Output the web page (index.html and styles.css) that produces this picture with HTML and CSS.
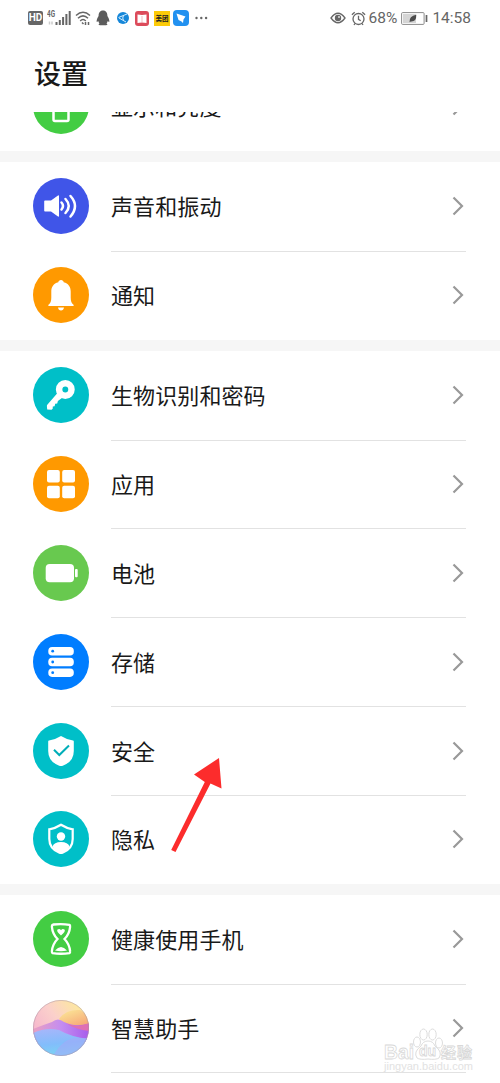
FILE: index.html
```html
<!DOCTYPE html>
<html lang="zh-CN">
  <head>
    <meta charset="UTF-8" />
    <meta name="viewport" content="width=device-width, initial-scale=1.0" />
    <title>设置</title>
    <link rel="stylesheet" href="styles.css">
  </head>
  <body>
    <svg width="0" height="0" class="defs">
      <symbol id="chevron" viewBox="0 0 12 20">
        <path d="M1.5 1.5 10 10 1.5 18.5" fill="none" stroke="#999" stroke-width="2.200" />
      </symbol>
    </svg>

    <div class="status">
      <div class="status-left">
        <div class="hd">HD</div>
        <svg class="signal" width="25" height="18" viewBox="0 0 25 18">
          <text x="0" y="8" class="net" textLength="8" lengthAdjust="spacingAndGlyphs">4G</text>
          <path d="M2.500 12.500v3M5 12.500v3" stroke="#ccc" stroke-width="1.500" />
          <path d="M9.500 13v3M12.800 11v5M16.100 8v8M19.400 5v11M22.700 2v14" stroke="#666" stroke-width="2" />
        </svg>
        <svg class="wifi" width="16" height="16" viewBox="0 0 16 16" fill="none" stroke="#666" stroke-width="1.500">
          <path d="M1 5.500Q8-1 15 5.500M3 8.300Q8 3.500 13 8.300M5.200 11Q8 8.200 10.800 11" />
          <path d="M7 12.500l1.500 1.500M10.500 12v3M13.500 12v3" />
        </svg>
        <svg class="qq" width="14" height="16" viewBox="0 0 14 16" fill="#5c5c5c">
          <path d="M7 .5C3.800.5 2.500 3 2.600 6 1.300 8 .4 10 .7 11.800c.4.7 1-.2 1.500-.7.2 1 .7 1.700 1.300 2.300-1.400.7-1 1.800.5 1.800h6c1.500 0 1.900-1.100.5-1.800.6-.6 1.100-1.300 1.300-2.300.5.5 1.100 1.400 1.500.7.300-1.800-.6-3.800-1.900-5.800C11.500 3 10.200.5 7 .5z" />
        </svg>
        <svg class="browser" width="12" height="12" viewBox="0 0 12 12">
          <circle cx="6" cy="6" r="6" fill="#1687d9" />
          <path d="M1.500 5.500 10 2M2 6l7 4M6.500 3.500Q5 6 6.500 8.500" fill="none" stroke="#d8efff" />
        </svg>
        <svg class="book" width="14" height="15" viewBox="0 0 14 15">
          <rect width="14" height="15" rx="3" fill="#dc4b5b" />
          <path d="M2.500 3.500 7 4 11.500 3.500v8.500L7 11.500l-4.500.5z" fill="#fff" />
          <path d="M7 5v6" stroke="#f0bdc3" />
        </svg>
        <div class="meituan">美团</div>
        <svg class="bird" width="16" height="16" viewBox="0 0 16 16">
          <rect width="16" height="16" rx="4" fill="#2291f0" />
          <path d="M3.500 3.500 12.500 6.500 10.500 9.500 10 13 8.500 11.500 5.500 10z" fill="#fff" />
        </svg>
        <svg width="13" height="4" viewBox="0 0 13 4" fill="#666">
          <circle cx="1.500" cy="2" r="1.200" /><circle cx="6.300" cy="2" r="1.200" /><circle cx="11.100" cy="2" r="1.200" />
        </svg>
      </div>
      <div class="status-right">
        <svg width="16" height="12" viewBox="0 0 16 12">
          <path d="M1 6Q8-3.500 15 6 8 15.500 1 6z" fill="none" stroke="#666" stroke-width="1.300" />
          <circle cx="8" cy="6" r="3.200" fill="#666" /><circle cx="9" cy="5" r="1" fill="#ddd" />
        </svg>
        <svg class="alarm" width="15" height="15" viewBox="0 0 15 15" fill="none" stroke="#666" stroke-width="1.300">
          <circle cx="7.500" cy="8" r="5.500" /><path d="M7.500 4.800V8.300L9.700 9.800M.9 3.800 3.700 1.200M14.100 3.800 11.300 1.200M4 12.500l-1 1.500M11 12.500l1 1.500" />
        </svg>
        <span class="percent">68%</span>
        <svg class="power" width="27" height="13" viewBox="0 0 27 13">
          <rect x=".6" y=".6" width="22.500" height="11.800" rx="1" fill="#fff" stroke="#8a8a8a" />
          <rect x="2" y="2" width="13" height="9" fill="#d5d5d5" />
          <path d="M8.500 10.300Q8 4 15.300 2.800 15.500 10 9.800 9.500z" fill="#4c4c4c" />
          <path d="M25.500 3v7" stroke="#666" stroke-width="1.700" />
        </svg>
        <span class="time">14:58</span>
      </div>
    </div>

    <h1>设置</h1>

    <div class="list">
      <div class="group">
        <div class="row">
          <svg class="icon" viewBox="0 0 56 56">
            <circle cx="28" cy="28" r="28" fill="#43cd43" />
            <rect x="20.500" y="17" width="15" height="26" rx="1.500" fill="none" stroke="#fff" stroke-width="2.500" />
          </svg>
          <div class="item"><span>显示和亮度</span><svg class="arrow"><use href="#chevron" /></svg></div>
        </div>
      </div>

      <div class="group">
        <div class="row">
          <svg class="icon" viewBox="0 0 56 56">
            <circle cx="28" cy="28" r="28" fill="#4055e8" />
            <path d="M12 22.500h6l7-5q1-.5 1 .7v19.600q0 1.200-1 .7l-7-5h-6q-.8 0-.8-.8v-9.400q0-.8.800-.8z" fill="#fff" />
            <path d="M28.500 24.500q3 3.500 0 7" fill="none" stroke="#fff" stroke-width="2.500" stroke-linecap="round" />
            <path d="M32.500 21q6.500 7 0 14M37.500 18q9 10 0 20.500" fill="none" stroke="#fff" stroke-width="2.500" stroke-linecap="round" />
          </svg>
          <div class="item"><span>声音和振动</span><svg class="arrow"><use href="#chevron" /></svg></div>
        </div>
        <div class="row">
          <svg class="icon" viewBox="0 0 56 56">
            <circle cx="28" cy="28" r="28" fill="#ff9900" />
            <path d="M28 13c-1.500 0-2.500 1-2.700 2.200-4.800 1.200-7 4.800-7 9.300v6c0 4-.8 5.500-2.800 7.300-.7.700-.3 1.200.5 1.200h24c.8 0 1.200-.5.5-1.200-2-1.800-2.800-3.300-2.800-7.300v-6c0-4.500-2.200-8.100-7-9.300C30.500 14 29.500 13 28 13zM25 40.500h6q-.5 3-3 3t-3-3z" fill="#fff" />
          </svg>
          <div class="item"><span>通知</span><svg class="arrow"><use href="#chevron" /></svg></div>
        </div>
      </div>

      <div class="group">
        <div class="row">
          <svg class="icon" viewBox="0 0 56 56">
            <circle cx="28" cy="28" r="28" fill="#00bfc8" />
            <circle cx="32.300" cy="22.500" r="6.200" fill="none" stroke="#fff" stroke-width="6.500" />
            <path d="M24.500 26 14.500 37.500q-.7.800-.6 1.700l.3 3.300 4.300.2 1.200-1 .1-2.200 1.800-.3.600-2.500 2-.3.700-2.500 5-3.700z" fill="#fff" />
          </svg>
          <div class="item"><span>生物识别和密码</span><svg class="arrow"><use href="#chevron" /></svg></div>
        </div>
        <div class="row">
          <svg class="icon" viewBox="0 0 56 56">
            <circle cx="28" cy="28" r="28" fill="#ff9900" />
            <g fill="#fff">
              <rect x="14" y="14" width="12.800" height="12.500" rx="2" /><rect x="29.200" y="14" width="12.800" height="12.500" rx="2" />
              <rect x="14" y="29.700" width="12.800" height="12.500" rx="2" /><rect x="29.200" y="29.700" width="12.800" height="12.500" rx="2" />
            </g>
          </svg>
          <div class="item"><span>应用</span><svg class="arrow"><use href="#chevron" /></svg></div>
        </div>
        <div class="row">
          <svg class="icon" viewBox="0 0 56 56">
            <circle cx="28" cy="28" r="28" fill="#68c94f" />
            <rect x="12.700" y="19" width="28.300" height="18.300" rx="4" fill="#fff" />
            <rect x="42" y="24" width="2.700" height="8.300" rx="1" fill="#fff" />
          </svg>
          <div class="item"><span>电池</span><svg class="arrow"><use href="#chevron" /></svg></div>
        </div>
        <div class="row">
          <svg class="icon" viewBox="0 0 56 56">
            <circle cx="28" cy="28" r="28" fill="#007dff" />
            <g fill="#fff">
              <rect x="15.300" y="13" width="25.500" height="8.500" rx="3.800" /><rect x="15.300" y="23.700" width="25.500" height="8.500" rx="3.800" /><rect x="15.300" y="34.400" width="25.500" height="8.500" rx="3.800" />
            </g>
            <g fill="#007dff"><circle cx="19.700" cy="17.200" r="1.400" /><circle cx="19.700" cy="28" r="1.400" /><circle cx="19.700" cy="38.700" r="1.400" /></g>
          </svg>
          <div class="item"><span>存储</span><svg class="arrow"><use href="#chevron" /></svg></div>
        </div>
        <div class="row">
          <svg class="icon" viewBox="0 0 56 56">
            <circle cx="28" cy="28" r="28" fill="#00bfc8" />
            <path d="M28 13q5.500 3.500 12 4.500.8.200.8 1v9.500q0 10.500-11 14.700-1.800.7-3.600 0-11-4.200-11-14.700v-9.500q0-.8.800-1Q22.500 16.500 28 13z" fill="#fff" />
            <path d="M21 26.800 26.300 32 36 22.500" fill="none" stroke="#00aeb8" stroke-width="2" />
          </svg>
          <div class="item"><span>安全</span><svg class="arrow"><use href="#chevron" /></svg></div>
        </div>
        <div class="row">
          <svg class="icon" viewBox="0 0 56 56">
            <circle cx="28" cy="28" r="28" fill="#00bfc8" />
            <path d="M28 13.800q5.500 3.500 11.700 4.500v9.700q0 9.800-10.200 13.700-1.500.6-3 0Q16.300 37.800 16.300 28v-9.700Q22.500 17.300 28 13.800z" fill="none" stroke="#fff" stroke-width="2.200" />
            <circle cx="28" cy="25.500" r="4.200" fill="#fff" />
            <path d="M19.500 35.500Q21 31 28 31t8.500 4.500Q34 40.500 28 42.200 22 40.500 19.500 35.500z" fill="#fff" />
          </svg>
          <div class="item"><span>隐私</span><svg class="arrow"><use href="#chevron" /></svg></div>
        </div>
      </div>

      <div class="group">
        <div class="row">
          <svg class="icon" viewBox="0 0 56 56">
            <circle cx="28" cy="28" r="28" fill="#43cd43" />
            <path d="M20.500 13.500Q29 12.500 36.500 13.800q.8.300.6 2-.6 7-5.600 12.200 5 5.200 5.600 12.200.2 1.700-.6 2Q28 43.300 19.500 42.200q-.7-.3-.6-2Q19.500 33.200 24.500 28 19.500 22.800 18.900 15.800q0-2 1.600-2.300z" fill="none" stroke="#fff" stroke-width="2.300" />
            <path d="M28 24.500Q23 20.500 24.500 18.600 26.500 17.200 28 19.200 29.500 17.200 31.500 18.600 33 20.500 28 24.500zM22 39.500Q28 32.500 34 39.500 28 41 22 39.500z" fill="#fff" />
          </svg>
          <div class="item"><span>健康使用手机</span><svg class="arrow"><use href="#chevron" /></svg></div>
        </div>
        <div class="row">
          <svg class="icon" viewBox="0 0 56 56">
            <defs>
              <clipPath id="ball"><circle cx="28" cy="28" r="28" /></clipPath>
              <linearGradient id="sky" x1="0" y1=".6" x2=".8" y2="0"><stop offset="0" stop-color="#f5b4cd" /><stop offset=".5" stop-color="#fbd0cb" /><stop offset="1" stop-color="#fdea9a" /></linearGradient>
              <linearGradient id="sun" x1=".2" y1="0" x2=".8" y2="1"><stop offset="0" stop-color="#fbe596" /><stop offset="1" stop-color="#f6a174" /></linearGradient>
              <linearGradient id="wave"><stop offset="0" stop-color="#e9a0c2" /><stop offset=".5" stop-color="#c48df0" /><stop offset="1" stop-color="#a75dec" /></linearGradient>
              <linearGradient id="sea" x1="0" y1="0" x2=".2" y2="1"><stop offset="0" stop-color="#a9b5fa" /><stop offset=".6" stop-color="#82bdfb" /><stop offset="1" stop-color="#7bd2f4" /></linearGradient>
            </defs>
            <g clip-path="url(#ball)">
              <rect width="56" height="56" fill="url(#sky)" />
              <path d="M26 19Q33 9 47 10L56 16V28H38Q30 24 26 19z" fill="url(#sun)" />
              <path d="M0 29Q10 25 19 22 25 17 31 22 40 27 56 24V42H0z" fill="url(#wave)" />
              <path d="M31 22Q43 29 56 23V31Q43 30 31 22z" fill="#df6fb3" />
              <path d="M0 33Q13 27 26 30 38 37 56 39V56H0z" fill="url(#sea)" />
              <path d="M20 56Q31 36 48 38H56V56z" fill="#a5a8f8" opacity=".55" />
            </g>
            <circle cx="28" cy="28" r="27.600" fill="none" stroke="#a995a5" stroke-width=".7" opacity=".7" />
          </svg>
          <div class="item"><span>智慧助手</span><svg class="arrow"><use href="#chevron" /></svg></div>
        </div>
        <div class="row"></div>
      </div>
    </div>

    <svg class="pointer" width="60" height="104" viewBox="0 0 60 104">
      <path d="M3.200 93 36.800 25 26 17.500 51 1 53.500 31.500 42.500 26.500 7.500 95z" fill="#fc2c2c" />
    </svg>

    <div class="watermark">
      <svg width="92" height="50" viewBox="0 0 92 50">
        <g class="paw">
          <ellipse cx="34" cy="15" rx="3.500" ry="5" /><ellipse cx="40.500" cy="7.500" rx="3.700" ry="5.500" />
          <ellipse cx="49.500" cy="7.500" rx="3.700" ry="5.500" /><ellipse cx="56" cy="16" rx="3.500" ry="5" />
          <path d="M45 14Q50 14 52 19 60 25 56 31 53 33 45 32 37 33 34 31 30 25 38 19 40 14 45 14z" />
        </g>
        <text x="1" y="32" class="brand" textLength="30" lengthAdjust="spacingAndGlyphs">Bai</text>
        <text x="36" y="29" class="du" textLength="17">du</text>
        <text x="58" y="31" class="jingyan" textLength="31">经验</text>
        <text x="1" y="43" class="site" textLength="89">jingyan.baidu.com</text>
      </svg>
    </div>
  </body>
</html>
```
FILE: styles.css
```css
* {
  margin: 0;
  padding: 0;
  box-sizing: border-box;
}
body {
  position: relative;
  width: 500px;
  height: 1083px;
  overflow: hidden;
  display: flex;
  flex-direction: column;
  background: #fff;
  color: #191919;
  font-family: "Noto Sans CJK SC", sans-serif;
}
svg {
  display: block;
  flex-shrink: 0;
}
.defs {
  position: absolute;
}
.status {
  height: 36px;
  padding: 0 29px 0 28px;
  display: flex;
  align-items: center;
  justify-content: space-between;
  color: #666;
  font-family: Roboto, sans-serif;
}
.status-left,
.status-right {
  display: flex;
  align-items: center;
}
.hd {
  width: 15px;
  height: 14px;
  border-radius: 2px;
  background: #666;
  color: #fff;
  font-size: 10px;
  font-weight: 700;
  line-height: 14px;
  text-align: center;
}
.signal {
  margin-left: 4px;
}
.net {
  font-size: 9px;
  font-weight: 700;
  fill: #666;
}
.wifi {
  margin-left: 3px;
}
.qq {
  margin-left: 5px;
}
.browser {
  margin-left: 7px;
}
.book {
  margin-left: 6px;
}
.meituan {
  width: 16px;
  height: 15px;
  margin-left: 5px;
  background: #fccb08;
  color: #222;
  font-family: "Noto Sans CJK SC", sans-serif;
  font-size: 6.500px;
  font-weight: 700;
  line-height: 15px;
  text-align: center;
}
.bird {
  margin: 0 6px 0 3px;
}
.alarm {
  margin-left: 5px;
}
.percent {
  margin-left: 3px;
  font-size: 15.500px;
}
.power {
  margin-left: 4px;
}
.time {
  margin-left: 4px;
  font-size: 15.500px;
}
h1 {
  height: 76px;
  padding-left: 34px;
  font-size: 27px;
  font-weight: 500;
  line-height: 73px;
}
.list {
  flex: 1;
  min-height: 0;
  overflow: hidden;
}
.group {
  border-bottom: 11px solid #f6f6f6;
}
.group:first-child {
  margin-top: -49.800px;
}
.group:first-child .row {
  padding-bottom: 1px;
}
.row {
  height: 88.850px;
  padding: 0 34px 0 33px;
  display: flex;
  align-items: center;
}
.icon {
  width: 56px;
  height: 56px;
  margin-right: 22px;
}
.item {
  flex: 1;
  height: calc(100% + 1px);
  margin-bottom: -1px;
  display: flex;
  align-items: center;
  justify-content: space-between;
  border-bottom: 1px solid #e2e2e2;
  font-size: 22px;
  letter-spacing: 0.100px;
}
.item span {
  padding-bottom: 2px;
}
.row:last-child .item {
  border-bottom-color: transparent;
}
.arrow {
  width: 12px;
  height: 20px;
  margin-right: 2px;
}
.pointer {
  position: absolute;
  left: 168px;
  top: 757px;
}
.watermark {
  position: absolute;
  left: 383px;
  top: 1027px;
  font-family: "Liberation Sans", "Noto Sans CJK SC", sans-serif;
}
.paw {
  fill: #fff;
  stroke: #ddd;
}
.brand,
.du,
.jingyan {
  fill: #fff;
  stroke: #d8d8d8;
  stroke-width: 0.800px;
  font-weight: 700;
}
.brand {
  font-size: 21px;
}
.du {
  font-size: 14px;
}
.jingyan {
  font-size: 15px;
}
.site {
  fill: #e2e2e2;
  font-size: 11px;
}
```
